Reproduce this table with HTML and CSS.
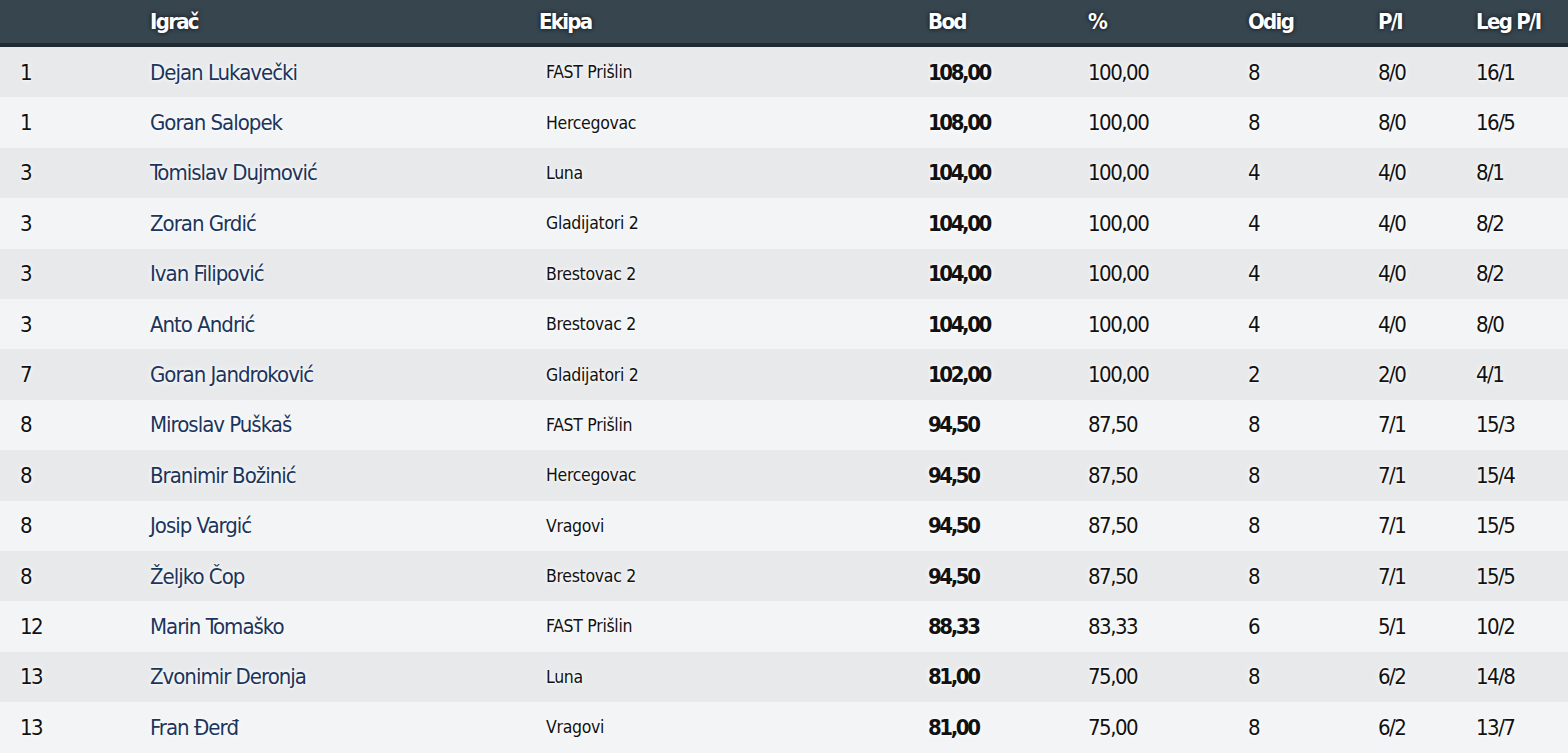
FILE: index.html
```html
<!DOCTYPE html>
<html lang="hr">
<head>
<meta charset="utf-8">
<title>Tablica igrača</title>
<link rel="stylesheet" href="styles.css">
</head>
<body>
<table class="standings">
  <colgroup>
    <col class="c-rank"><col class="c-name"><col class="c-team"><col class="c-pts"><col class="c-pct"><col class="c-played"><col class="c-wl"><col class="c-leg">
  </colgroup>
  <thead>
    <tr><th></th><th>Igrač</th><th>Ekipa</th><th>Bod</th><th>%</th><th>Odig</th><th>P/I</th><th>Leg P/I</th></tr>
  </thead>
  <tbody>
    <tr><td>1</td><td class="name">Dejan Lukavečki</td><td class="team">FAST Prišlin</td><td class="pts">108,00</td><td>100,00</td><td>8</td><td>8/0</td><td>16/1</td></tr>
    <tr><td>1</td><td class="name">Goran Salopek</td><td class="team">Hercegovac</td><td class="pts">108,00</td><td>100,00</td><td>8</td><td>8/0</td><td>16/5</td></tr>
    <tr><td>3</td><td class="name">Tomislav Dujmović</td><td class="team">Luna</td><td class="pts">104,00</td><td>100,00</td><td>4</td><td>4/0</td><td>8/1</td></tr>
    <tr><td>3</td><td class="name">Zoran Grdić</td><td class="team">Gladijatori 2</td><td class="pts">104,00</td><td>100,00</td><td>4</td><td>4/0</td><td>8/2</td></tr>
    <tr><td>3</td><td class="name">Ivan Filipović</td><td class="team">Brestovac 2</td><td class="pts">104,00</td><td>100,00</td><td>4</td><td>4/0</td><td>8/2</td></tr>
    <tr><td>3</td><td class="name">Anto Andrić</td><td class="team">Brestovac 2</td><td class="pts">104,00</td><td>100,00</td><td>4</td><td>4/0</td><td>8/0</td></tr>
    <tr><td>7</td><td class="name">Goran Jandroković</td><td class="team">Gladijatori 2</td><td class="pts">102,00</td><td>100,00</td><td>2</td><td>2/0</td><td>4/1</td></tr>
    <tr><td>8</td><td class="name">Miroslav Puškaš</td><td class="team">FAST Prišlin</td><td class="pts">94,50</td><td>87,50</td><td>8</td><td>7/1</td><td>15/3</td></tr>
    <tr><td>8</td><td class="name">Branimir Božinić</td><td class="team">Hercegovac</td><td class="pts">94,50</td><td>87,50</td><td>8</td><td>7/1</td><td>15/4</td></tr>
    <tr><td>8</td><td class="name">Josip Vargić</td><td class="team">Vragovi</td><td class="pts">94,50</td><td>87,50</td><td>8</td><td>7/1</td><td>15/5</td></tr>
    <tr><td>8</td><td class="name">Željko Čop</td><td class="team">Brestovac 2</td><td class="pts">94,50</td><td>87,50</td><td>8</td><td>7/1</td><td>15/5</td></tr>
    <tr><td>12</td><td class="name">Marin Tomaško</td><td class="team">FAST Prišlin</td><td class="pts">88,33</td><td>83,33</td><td>6</td><td>5/1</td><td>10/2</td></tr>
    <tr><td>13</td><td class="name">Zvonimir Deronja</td><td class="team">Luna</td><td class="pts">81,00</td><td>75,00</td><td>8</td><td>6/2</td><td>14/8</td></tr>
    <tr><td>13</td><td class="name">Fran Đerđ</td><td class="team">Vragovi</td><td class="pts">81,00</td><td>75,00</td><td>8</td><td>6/2</td><td>13/7</td></tr>
  </tbody>
</table>
</body>
</html>
```
FILE: styles.css
```css
html, body {
  margin: 0;
  padding: 0;
  background: #f2f4f6;
}
body {
  font-family: "DejaVu Sans Condensed", "Liberation Sans", sans-serif;
  color: #111;
}
.standings {
  width: 1568px;
  border-collapse: collapse;
  table-layout: fixed;
}
.c-rank { width: 130px; }
.c-name { width: 389px; }
.c-team { width: 389px; }
.c-pts { width: 160px; }
.c-pct { width: 160px; }
.c-played { width: 130px; }
.c-wl { width: 98px; }
.c-leg { width: 112px; }
.standings th {
  background: #37454f;
  color: #fff;
  font-weight: 700;
  font-size: 22px;
  letter-spacing: -1.7px;
  text-align: left;
  padding: 0 0 0 20px;
  height: 43px;
  border-bottom: 4px solid #1f2a31;
  text-shadow: 0 0 4px rgba(0,0,0,0.85);
  vertical-align: middle;
}
.standings td {
  font-size: 22px;
  letter-spacing: -1.5px;
  padding: 0 0 0 20px;
  height: 50.4px;
  vertical-align: middle;
  white-space: nowrap;
  text-shadow: 0 0 6px #fff, 0 0 3px #fff;
}
.standings tbody tr:nth-child(odd) td { background: #e8e9eb; }
.standings tbody tr:nth-child(even) td { background: #f2f4f6; }
.standings td.name { color: #1b355c; letter-spacing: -1px; }
.standings td.team { font-size: 17.5px; letter-spacing: -0.3px; padding-left: 27px; }
.standings td.pts { font-weight: 700; letter-spacing: -2.4px; }
```
